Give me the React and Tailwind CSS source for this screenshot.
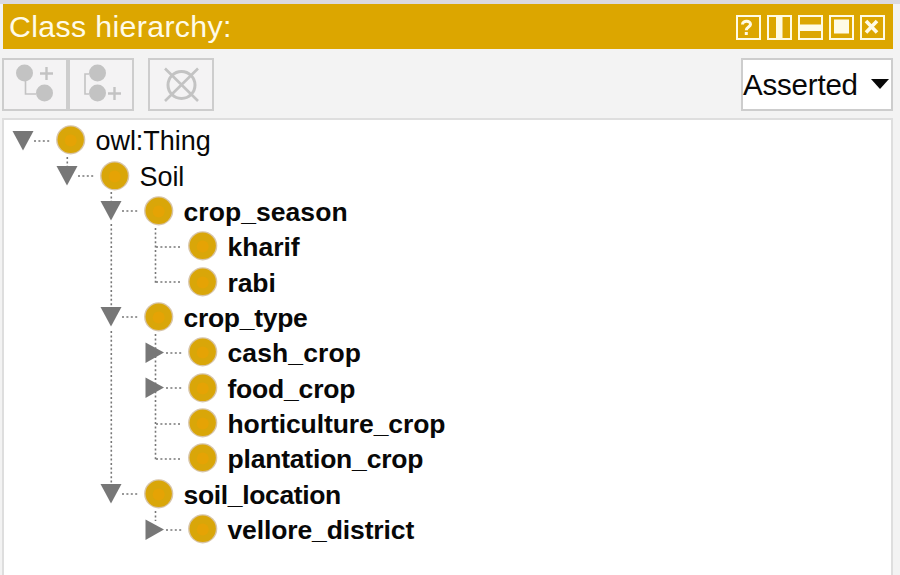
const rows = [
  { label: 'owl:Thing', level: 0, state: 'open', type: 'text-[27px] tracking-[-0.05px]' },
  { label: 'Soil', level: 1, state: 'open', type: 'text-[27px] tracking-[-0.05px]' },
  { label: 'crop_season', level: 2, state: 'open', type: 'font-bold text-[26.5px] tracking-[0.06px]' },
  { label: 'kharif', level: 3, state: 'leaf', type: 'font-bold text-[26.5px]' },
  { label: 'rabi', level: 3, state: 'leaf', type: 'font-bold text-[26.5px] tracking-[-0.1px]' },
  { label: 'crop_type', level: 2, state: 'open', type: 'font-bold text-[26.5px] tracking-[-0.3px]' },
  { label: 'cash_crop', level: 3, state: 'closed', type: 'font-bold text-[26.5px] tracking-[0.1px]' },
  { label: 'food_crop', level: 3, state: 'closed', type: 'font-bold text-[26.5px] tracking-[-0.2px]' },
  { label: 'horticulture_crop', level: 3, state: 'leaf', type: 'font-bold text-[26.5px] tracking-[-0.09px]' },
  { label: 'plantation_crop', level: 3, state: 'leaf', type: 'font-bold text-[26.5px] tracking-[-0.2px]' },
  { label: 'soil_location', level: 2, state: 'open', type: 'font-bold text-[26.5px] tracking-[-0.35px]' },
  { label: 'vellore_district', level: 3, state: 'closed', type: 'font-bold text-[26.5px] tracking-[-0.12px]' },
];

const indents = ['pl-[8px]', 'pl-[52px]', 'pl-[96px]', 'pl-[140px]'];

function Row({ label, level, state, type }) {
  return (
    <div className={`flex h-[35.36px] shrink-0 items-center ${indents[level]}`}>
      <svg className="h-[35px] w-[44px] shrink-0" viewBox="0 0 44 35">
        {state === 'open' && <path d="M0.5 8H21.5L11 27.5Z" fill="#777" />}
        {state === 'closed' && <path d="M1.5 7.5L20 17.5L1.5 28Z" fill="#777" />}
        <line
          x1={state === 'leaf' ? 12 : 22}
          x2="37.5"
          y1="18"
          y2="18"
          stroke="#777"
          strokeWidth="1.6"
          strokeDasharray="2 2.4"
        />
      </svg>
      <svg className="h-[30px] w-[30px] shrink-0" viewBox="0 0 30 30">
        <circle cx="14.7" cy="14.8" r="14.6" fill="#d8c5a8" />
        <circle cx="14.7" cy="14.8" r="13.2" fill="#d9a609" />
        <circle cx="14.7" cy="15.4" r="6" fill="#e5a305" />
      </svg>
      <span className={`ml-[9.5px] whitespace-nowrap pt-[2px] leading-[32px] ${type}`}>{label}</span>
    </div>
  );
}

function Connectors() {
  const lines = [
    [63.3, 37, 47],
    [107.3, 72, 82],
    [107.3, 104, 188],
    [107.3, 211, 364],
    [151.5, 108, 163],
    [151.5, 214, 340],
    [151.5, 391, 401],
  ];
  return (
    <svg className="pointer-events-none absolute left-0 top-0 h-[440px] w-[240px]" viewBox="0 0 240 440">
      {lines.map(([x, a, b]) => (
        <line key={`${x}-${a}`} x1={x} x2={x} y1={a} y2={b} stroke="#777" strokeWidth="1.6" strokeDasharray="2 2.4" />
      ))}
    </svg>
  );
}

function WindowIcon({ children }) {
  return (
    <svg className="h-[25px] w-[25px]" viewBox="0 0 25 25" fill="none" stroke="#fffbe5">
      <rect x="1" y="1" width="23" height="23" strokeWidth="2" />
      {children}
    </svg>
  );
}

function ToolButton({ className = '', children }) {
  return (
    <button className={`h-[53px] w-[66px] border-2 border-[#cdcdcd] bg-[#f4f3f4] ${className}`}>
      <svg className="h-[49px] w-[62px]" viewBox="0 0 62 49" fill="none" stroke="#c3c3c3" strokeWidth="2">
        {children}
      </svg>
    </button>
  );
}

export default function App() {
  return (
    <div className="flex h-[575px] w-[900px] flex-col overflow-hidden bg-[#f3f3f3] font-['Liberation_Sans',Arial,sans-serif] text-[#080808]">
      <div className="h-[4px] shrink-0 bg-[#dbd9df]" />
      <header className="ml-[3px] mr-[7px] flex h-[45px] shrink-0 items-center justify-between bg-[#dca600] pl-[6px] pr-[8px]">
        <h1 className="whitespace-nowrap text-[30.3px] leading-[44px] tracking-[0.35px] text-[#fffbe8]">Class hierarchy:</h1>
        <div className="flex gap-[6px] pt-[2px]">
          <WindowIcon>
            <path d="M6.5 9.5C6.5 5 15 5.3 14.5 9.5C14.2 12 10.3 12 10.3 15.2M10.3 17V20" strokeWidth="3" />
          </WindowIcon>
          <WindowIcon>
            <rect x="9" y="1" width="6.5" height="23" fill="#fffbe5" stroke="none" />
          </WindowIcon>
          <WindowIcon>
            <rect x="1" y="9.5" width="23" height="6.5" fill="#fffbe5" stroke="none" />
          </WindowIcon>
          <WindowIcon>
            <rect x="5" y="4.5" width="15" height="14" fill="#fffbe5" stroke="none" />
          </WindowIcon>
          <WindowIcon>
            <path d="M6 6L17 17.5M17 6L6 17.5" strokeWidth="3.6" />
          </WindowIcon>
        </div>
      </header>
      <div className="flex h-[69px] shrink-0 items-center pl-[2px] pr-[7px] pt-[1px]">
        <ToolButton>
          <circle cx="20.5" cy="13" r="8.5" fill="#c3c3c3" stroke="none" />
          <circle cx="40.5" cy="33" r="8.5" fill="#c3c3c3" stroke="none" />
          <path d="M21.5 21V34H32" strokeWidth="1.6" />
          <path d="M36 13.5H49M42.5 7V20" strokeWidth="2.4" />
        </ToolButton>
        <ToolButton>
          <circle cx="27.5" cy="13" r="8.5" fill="#c3c3c3" stroke="none" />
          <circle cx="27.5" cy="33" r="8.5" fill="#c3c3c3" stroke="none" />
          <path d="M19 14H15V34H19" strokeWidth="1.6" />
          <path d="M38 33.5H51M44.5 27V40" strokeWidth="2.4" />
        </ToolButton>
        <ToolButton className="ml-[14px]">
          <circle cx="31.5" cy="25" r="13.5" strokeWidth="3" />
          <path d="M15 8.5L48 41M48 8.5L15 41" strokeWidth="2.6" />
        </ToolButton>
        <button className="ml-auto flex h-[53px] w-[152px] items-center justify-between border-2 border-[#cdcdcd] bg-white pr-[2px] text-[29.5px] leading-[47px] tracking-[-0.2px]">
          <span className="whitespace-nowrap">Asserted</span>
          <svg className="h-[10px] w-[18px]" viewBox="0 0 18 10">
            <path d="M0 0H18L9 10Z" fill="#080808" />
          </svg>
        </button>
      </div>
      <main className="relative ml-[2px] mr-[7px] flex grow flex-col border-x-2 border-t-2 border-[#dedede] bg-white pt-[2.5px]">
        <Connectors />
        {rows.map((row) => (
          <Row key={row.label} {...row} />
        ))}
      </main>
    </div>
  );
}
